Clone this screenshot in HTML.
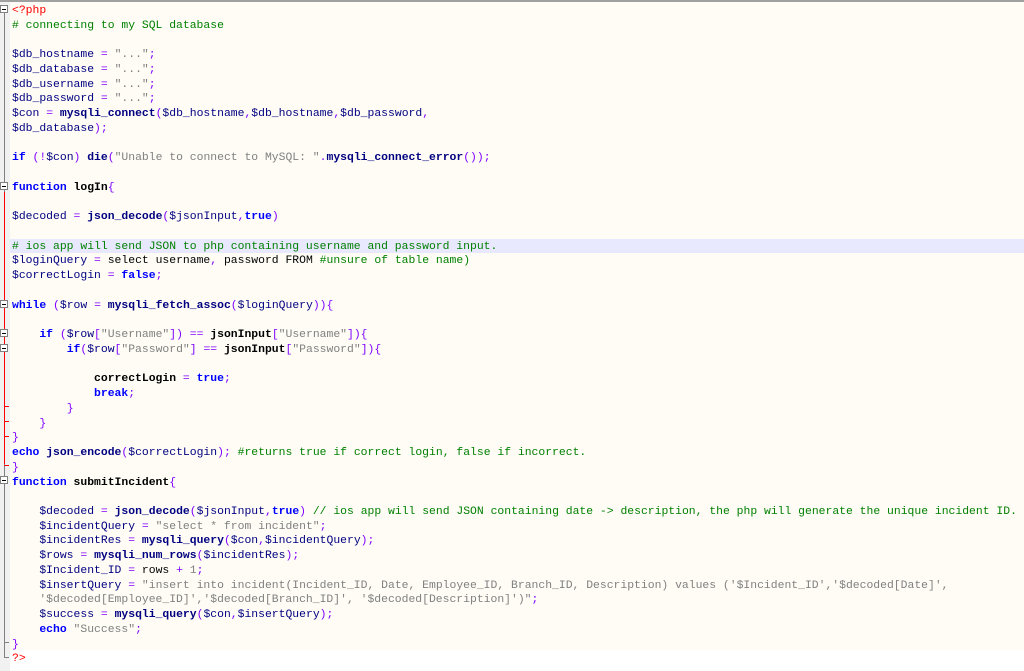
<!DOCTYPE html>
<html><head><meta charset="utf-8"><style>
html,body{margin:0;padding:0;background:#fff;width:1024px;height:671px;overflow:hidden}
#ed{position:absolute;left:0;top:0;width:1024px;height:671px;}
#topb{position:absolute;left:0;top:0;width:1024px;height:2px;background:#a0a0a0}
#bg{position:absolute;left:10px;top:2px;width:1014px;height:648px;background:#fefcf5}
#gut{position:absolute;left:0;top:2px;width:10px;height:669px;background:#f1f1f1}
#cur{position:absolute;left:10px;top:238.5px;width:1014px;height:14.73px;background:#e8e8ff}
#code{position:absolute;left:12px;top:4px;font-family:"Liberation Mono",monospace;font-size:11.4px;line-height:14.73px;white-space:pre;color:#000}
.k{color:#0000ff;font-weight:bold}.v{color:#000080}.f{color:#000080;font-weight:bold}.o{color:#8000ff}.s{color:#808080}.c{color:#008000}.t{color:#ff0000}.b{font-weight:bold}
.vl{position:absolute;width:1px}
.fm{position:absolute;left:0;width:8px;height:8px;border:1px solid #808080;background:#fff;box-sizing:border-box}
.fm:after{content:"";position:absolute;left:1px;top:3px;width:4px;height:1px;background:#000}
.tk{position:absolute;left:4px;width:5px;height:1px}
</style></head><body><div id="ed">
<div id="topb"></div><div id="bg"></div><div id="gut"></div><div id="cur"></div>
<div class="vl" style="left:4px;top:12px;height:645px;background:#808080"></div>
<div class="vl" style="left:4px;top:192px;height:272px;background:#ff0000"></div>
<div class="tk" style="top:657px;background:#808080"></div>
<div class="tk" style="top:465px;background:#ff0000"></div>
<div class="tk" style="top:436px;background:#ff0000"></div>
<div class="tk" style="top:421px;background:#ff0000"></div>
<div class="tk" style="top:406px;background:#ff0000"></div>
<div class="tk" style="top:642px;background:#808080"></div>
<div class="fm" style="top:5px"></div>
<div class="fm" style="top:182px"></div>
<div class="fm" style="top:300px"></div>
<div class="fm" style="top:329px"></div>
<div class="fm" style="top:344px"></div>
<div class="fm" style="top:476px"></div>
<div id="code"><span class="t">&lt;?php</span>
<span class="c"># connecting to my SQL database</span>

<span class="v">$db_hostname</span> <span class="o">=</span> <span class="s">"..."</span><span class="o">;</span>
<span class="v">$db_database</span> <span class="o">=</span> <span class="s">"..."</span><span class="o">;</span>
<span class="v">$db_username</span> <span class="o">=</span> <span class="s">"..."</span><span class="o">;</span>
<span class="v">$db_password</span> <span class="o">=</span> <span class="s">"..."</span><span class="o">;</span>
<span class="v">$con</span> <span class="o">=</span> <span class="f">mysqli_connect</span><span class="o">(</span><span class="v">$db_hostname</span><span class="o">,</span><span class="v">$db_hostname</span><span class="o">,</span><span class="v">$db_password</span><span class="o">,</span>
<span class="v">$db_database</span><span class="o">);</span>

<span class="k">if</span> <span class="o">(!</span><span class="v">$con</span><span class="o">)</span> <span class="f">die</span><span class="o">(</span><span class="s">"Unable to connect to MySQL: "</span><span class="o">.</span><span class="f">mysqli_connect_error</span><span class="o">());</span>

<span class="k">function</span> <span class="b">logIn</span><span class="o">{</span>

<span class="v">$decoded</span> <span class="o">=</span> <span class="f">json_decode</span><span class="o">(</span><span class="v">$jsonInput</span><span class="o">,</span><span class="k">true</span><span class="o">)</span>

<span class="c"># ios app will send JSON to php containing username and password input.</span>
<span class="v">$loginQuery</span> <span class="o">=</span> select username<span class="o">,</span> password FROM <span class="c">#unsure of table name)</span>
<span class="v">$correctLogin</span> <span class="o">=</span> <span class="k">false</span><span class="o">;</span>

<span class="k">while</span> <span class="o">(</span><span class="v">$row</span> <span class="o">=</span> <span class="f">mysqli_fetch_assoc</span><span class="o">(</span><span class="v">$loginQuery</span><span class="o">)){</span>

    <span class="k">if</span> <span class="o">(</span><span class="v">$row</span><span class="o">[</span><span class="s">"Username"</span><span class="o">])</span> <span class="o">==</span> <span class="b">jsonInput</span><span class="o">[</span><span class="s">"Username"</span><span class="o">]){</span>
        <span class="k">if</span><span class="o">(</span><span class="v">$row</span><span class="o">[</span><span class="s">"Password"</span><span class="o">]</span> <span class="o">==</span> <span class="b">jsonInput</span><span class="o">[</span><span class="s">"Password"</span><span class="o">]){</span>

            <span class="b">correctLogin</span> <span class="o">=</span> <span class="k">true</span><span class="o">;</span>
            <span class="k">break</span><span class="o">;</span>
        <span class="o">}</span>
    <span class="o">}</span>
<span class="o">}</span>
<span class="k">echo</span> <span class="f">json_encode</span><span class="o">(</span><span class="v">$correctLogin</span><span class="o">);</span> <span class="c">#returns true if correct login, false if incorrect.</span>
<span class="o">}</span>
<span class="k">function</span> <span class="b">submitIncident</span><span class="o">{</span>

    <span class="v">$decoded</span> <span class="o">=</span> <span class="f">json_decode</span><span class="o">(</span><span class="v">$jsonInput</span><span class="o">,</span><span class="k">true</span><span class="o">)</span> <span class="c">// ios app will send JSON containing date -&gt; description, the php will generate the unique incident ID.</span>
    <span class="v">$incidentQuery</span> <span class="o">=</span> <span class="s">"select * from incident"</span><span class="o">;</span>
    <span class="v">$incidentRes</span> <span class="o">=</span> <span class="f">mysqli_query</span><span class="o">(</span><span class="v">$con</span><span class="o">,</span><span class="v">$incidentQuery</span><span class="o">);</span>
    <span class="v">$rows</span> <span class="o">=</span> <span class="f">mysqli_num_rows</span><span class="o">(</span><span class="v">$incidentRes</span><span class="o">);</span>
    <span class="v">$Incident_ID</span> <span class="o">=</span> rows <span class="o">+</span> <span class="s">1</span><span class="o">;</span>
    <span class="v">$insertQuery</span> <span class="o">=</span> <span class="s">"insert into incident(Incident_ID, Date, Employee_ID, Branch_ID, Description) values ('$Incident_ID','$decoded[Date]',</span>
    <span class="s">'$decoded[Employee_ID]','$decoded[Branch_ID]', '$decoded[Description]')"</span><span class="o">;</span>
    <span class="v">$success</span> <span class="o">=</span> <span class="f">mysqli_query</span><span class="o">(</span><span class="v">$con</span><span class="o">,</span><span class="v">$insertQuery</span><span class="o">);</span>
    <span class="k">echo</span> <span class="s">"Success"</span><span class="o">;</span>
<span class="o">}</span>
<span class="t">?&gt;</span></div>
</div></body></html>
